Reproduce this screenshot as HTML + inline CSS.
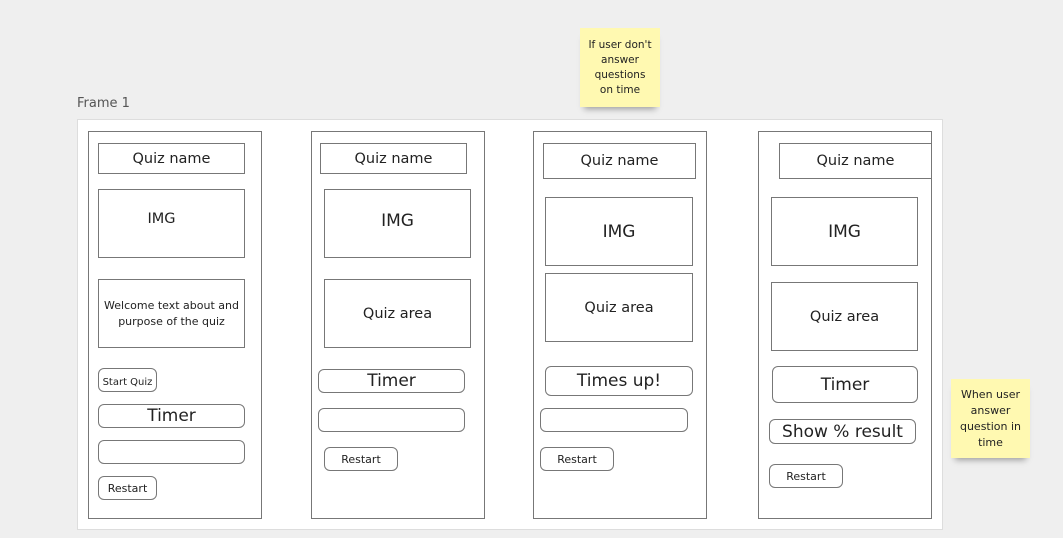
<!DOCTYPE html>
<html><head><style>
body{margin:0;width:1063px;height:538px;background:#efefef;position:relative;overflow:hidden;font-family:"DejaVu Sans","Liberation Sans",sans-serif;color:#222}
div{position:absolute;box-sizing:border-box}
.b{border:1.5px solid #777;background:#fff;display:flex;align-items:center;justify-content:center;text-align:center}
.r{border-radius:6px;border:1px solid #777}
.s{background:#fff9b1;font-size:10.5px;line-height:15px;display:flex;align-items:center;justify-content:center;text-align:center;box-shadow:0 6px 6px -4px rgba(0,0,0,.35)}
</style></head><body>
<div style="left:77px;top:96px;font-size:13px;color:#555">Frame 1</div>
<div style="left:77px;top:119px;width:866px;height:411px;background:#fff;border:1px solid #ddd"></div>

<div class="b" style="left:88px;top:131px;width:174px;height:388px"></div>
<div class="b" style="left:98px;top:143px;width:147px;height:31px;font-size:14.5px">Quiz name</div>
<div class="b" style="left:98px;top:189px;width:147px;height:69px;font-size:14.5px;align-items:flex-start;padding-top:21px;padding-right:20px">IMG</div>
<div class="b" style="left:98px;top:279px;width:147px;height:69px;font-size:11px;line-height:16px">Welcome text about and purpose of the quiz</div>
<div class="b r" style="left:98px;top:368px;width:59px;height:24px;font-size:10px;padding-top:5px">Start Quiz</div>
<div class="b r" style="left:98px;top:404px;width:147px;height:24px;font-size:17px">Timer</div>
<div class="b r" style="left:98px;top:440px;width:147px;height:24px"></div>
<div class="b r" style="left:98px;top:476px;width:59px;height:24px;font-size:11px">Restart</div>

<div class="b" style="left:311px;top:131px;width:174px;height:388px"></div>
<div class="b" style="left:320px;top:143px;width:147px;height:31px;font-size:14.5px">Quiz name</div>
<div class="b" style="left:324px;top:189px;width:147px;height:69px;font-size:17px;padding-bottom:6px">IMG</div>
<div class="b" style="left:324px;top:279px;width:147px;height:69px;font-size:14.5px">Quiz area</div>
<div class="b r" style="left:318px;top:369px;width:147px;height:24px;font-size:17px">Timer</div>
<div class="b r" style="left:318px;top:408px;width:147px;height:24px"></div>
<div class="b r" style="left:324px;top:447px;width:74px;height:24px;font-size:11px">Restart</div>

<div class="b" style="left:533px;top:131px;width:174px;height:388px"></div>
<div class="b" style="left:543px;top:143px;width:153px;height:36px;font-size:14.5px">Quiz name</div>
<div class="b" style="left:545px;top:197px;width:148px;height:69px;font-size:17px">IMG</div>
<div class="b" style="left:545px;top:273px;width:148px;height:69px;font-size:14.5px">Quiz area</div>
<div class="b r" style="left:545px;top:366px;width:148px;height:30px;font-size:17px">Times up!</div>
<div class="b r" style="left:540px;top:408px;width:148px;height:24px"></div>
<div class="b r" style="left:540px;top:447px;width:74px;height:24px;font-size:11px">Restart</div>

<div class="b" style="left:758px;top:131px;width:174px;height:388px"></div>
<div class="b" style="left:779px;top:143px;width:153px;height:36px;font-size:14.5px">Quiz name</div>
<div class="b" style="left:771px;top:197px;width:147px;height:69px;font-size:17px">IMG</div>
<div class="b" style="left:771px;top:282px;width:147px;height:69px;font-size:14.5px">Quiz area</div>
<div class="b r" style="left:772px;top:366px;width:146px;height:37px;font-size:17px">Timer</div>
<div class="b r" style="left:769px;top:419px;width:147px;height:25px;font-size:17px">Show % result</div>
<div class="b r" style="left:769px;top:464px;width:74px;height:24px;font-size:11px">Restart</div>

<div class="s" style="left:580px;top:28px;width:80px;height:79px">If user don't<br>answer<br>questions<br>on time</div>
<div class="s" style="left:951px;top:379px;width:79px;height:79px;font-size:11px;line-height:16px">When user<br>answer<br>question in<br>time</div>
</body></html>
